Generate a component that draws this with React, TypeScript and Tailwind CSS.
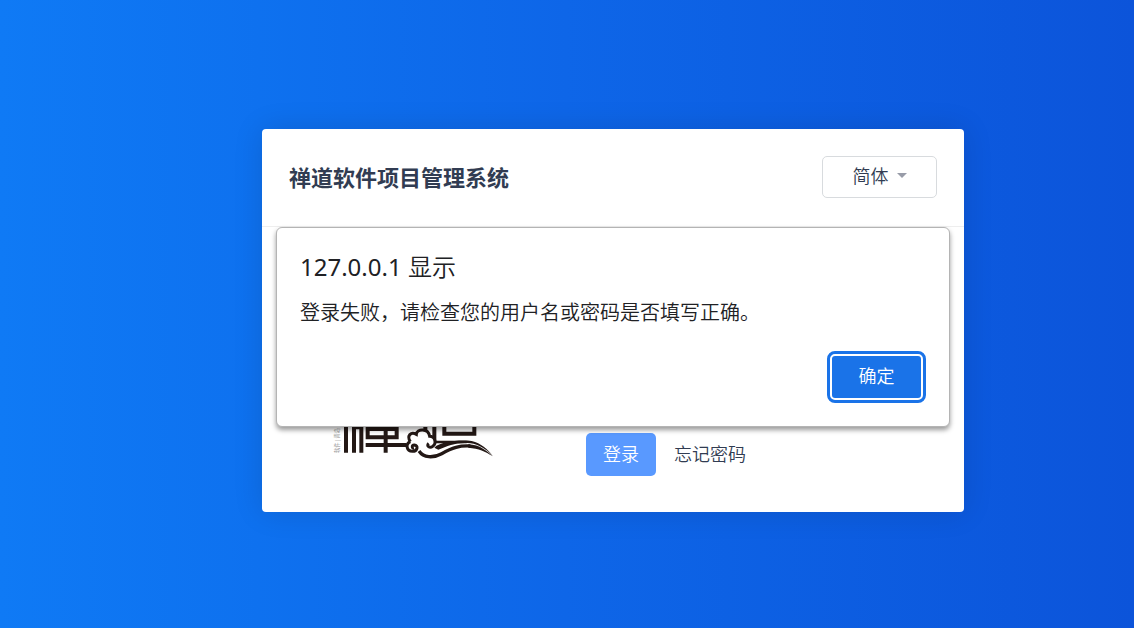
import { useState } from "react";

function ZentaoLogo() {
  return (
    <svg
      role="img"
      aria-label="禅道"
      width="180"
      height="55"
      viewBox="0 0 540 165"
      fill="none"
      stroke="#231815"
      strokeWidth="12"
    >
      <text
        transform="translate(41 114) rotate(-90)"
        fontSize="16"
        fill="#8c8c8c"
        stroke="none"
        className="font-['Noto_Sans_CJK_SC',sans-serif]"
      >
        软件 | 青岛
      </text>

      <path d="M63 24V113M87 36V113M109 36V113M81 37H115" />
      <path d="M128 24V67H215M215 24V73M128 42H215M182 24V113M122 90H250" />
      <path d="M301 20V50M328 24V82" />
      <path d="M358 24V56H448V24" />
      <path d="M322 81H425" strokeWidth="8" />

      <path
        d="M250 76C247 57 262 50 273 56C278 40 307 40 314 60C331 60 334 84 324 96L290 108L262 108C242 104 240 84 250 76Z"
        fill="#fff"
        stroke="none"
      />
      <path
        d="M256 80C244 62 258 49 274 58C275 41 310 38 314 64C330 64 336 85 323 94C314 101 303 92 311 85"
        strokeWidth="9"
      />
      <path d="M256 80C240 87 245 109 262 109C278 109 281 91 268 90C259 91 261 101 267 99" strokeWidth="9" />
      <path d="M282 108C296 129 324 130 350 116C382 98 404 91 436 93" strokeWidth="10" />
      <path d="M430 88C466 90 484 107 504 124C480 109 462 101 430 98Z" fill="#231815" stroke="none" />
      <path
        d="M328 98C346 80 400 74 440 78C468 85 488 102 503 122C483 103 462 88 436 85C400 80 370 91 340 104Z"
        fill="#231815"
        stroke="none"
      />
    </svg>
  );
}

function AlertDialog({ onClose }: { onClose: () => void }) {
  return (
    <div
      role="alertdialog"
      aria-labelledby="alert-title"
      aria-describedby="alert-message"
      className="absolute inset-x-[14px] top-[98px] flex h-[200px] flex-col rounded-md border border-[#b4b4b4] bg-white px-[23px] pt-6 text-[#202124] shadow-[0_3px_5px_rgba(0,0,0,0.4)]"
    >
      <h2 id="alert-title" className="text-2xl leading-[30px]">
        127.0.0.1 <span className="font-[350]">显示</span>
      </h2>
      <p id="alert-message" className="mt-[17px] text-xl leading-7 font-[350]">
        登录失败，请检查您的用户名或密码是否填写正确。
      </p>
      <button
        type="button"
        onClick={onClose}
        className="mt-6 h-[52px] w-[99px] self-end rounded-lg border-[3px] border-[#1a73e8] bg-[#1a73e8] text-lg font-[350] text-white"
      >
        <span className="flex h-full items-center justify-center rounded-[5px] border-2 border-white pb-[2px]">
          确定
        </span>
      </button>
    </div>
  );
}

export default function App() {
  const [alertOpen, setAlertOpen] = useState(true);

  return (
    <main className="flex min-h-screen items-center justify-center bg-linear-to-r from-[#0f7af5] via-[#0e66e8] to-[#0c54da] pt-[13px] pl-[92px] font-['Noto_Sans','Noto_Sans_CJK_SC',sans-serif] text-[#313c52]">
      <section className="relative w-full max-w-[702px] rounded bg-white shadow-[0_0_30px_rgba(0,0,0,0.12)]">
        <header className="flex h-[98px] items-center justify-between border-b border-[#eeeeee] px-[27px] pb-[2px]">
          <h1 className="text-[22px] leading-8 font-bold">禅道软件项目管理系统</h1>
          <button
            type="button"
            className="flex h-[42px] w-[115px] items-center justify-center gap-2 rounded-[5px] border border-[#d8dbde] pb-[2px] text-lg font-[350]"
          >
            简体
            <svg width="10" height="5" viewBox="0 0 10 5" fill="#989ca8" aria-hidden="true">
              <path d="M0 0H10L5 5Z" />
            </svg>
          </button>
        </header>

        <form className="flex h-[285px] items-end pb-9 pl-[63px]" onSubmit={(e) => e.preventDefault()}>
          <div className="w-[261px] pb-[6px]">
            <ZentaoLogo />
          </div>
          <div className="flex items-center gap-[18px] text-lg font-[350]">
            <button type="submit" className="h-[43px] w-[70px] rounded-[5px] bg-[#5999ff] pb-[2px] text-white">
              登录
            </button>
            <a href="#reset" className="pb-[2px]">
              忘记密码
            </a>
          </div>
        </form>

        {alertOpen && <AlertDialog onClose={() => setAlertOpen(false)} />}
      </section>
    </main>
  );
}
